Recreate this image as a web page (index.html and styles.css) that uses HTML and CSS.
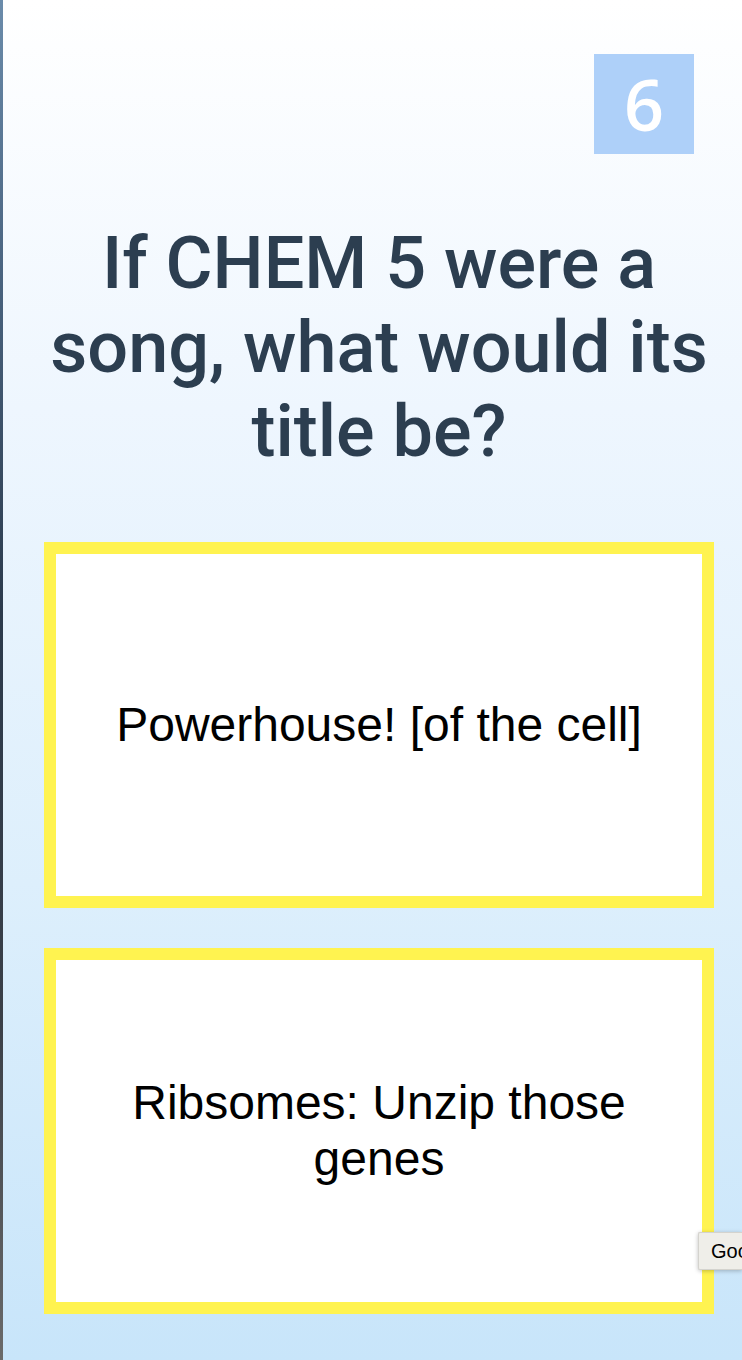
FILE: index.html
```html
<!DOCTYPE html>
<html lang="en">
<head>
<meta charset="utf-8">
<title>Question 6</title>
<link rel="stylesheet" href="styles.css">
</head>
<body>
<div class="edge"></div>
<main class="page">
  <div class="header">
    <div class="badge">6</div>
  </div>
  <h1 class="question">If CHEM 5 were a song, what would its title be?</h1>
  <div class="answers">
    <div class="card"><p class="answer">Powerhouse! [of the cell]</p></div>
    <div class="card"><p class="answer">Ribsomes: Unzip those genes</p></div>
  </div>
</main>
<div class="translate">Google</div>
</body>
</html>
```
FILE: styles.css
```css
html, body {
  margin: 0;
  padding: 0;
}
body {
  display: flex;
  min-height: 1360px;
  width: 742px;
  overflow: hidden;
  background: linear-gradient(to bottom, #ffffff 0%, #eef6fe 30%, #ddeffc 65%, #c8e5fa 100%);
  position: relative;
}
.edge {
  flex: 0 0 3px;
  background: linear-gradient(to bottom, #6b8cab 0%, #4a6480 20%, #2b3a4c 45%, #3a3f47 75%, #6a6a6a 100%);
}
.page {
  flex: 1;
  padding: 54px 28px 0 41px;
  display: flex;
  flex-direction: column;
}
.header {
  display: flex;
  justify-content: flex-end;
  padding-right: 20px;
}
.badge {
  width: 100px;
  height: 100px;
  background: #aed0f9;
  color: #ffffff;
  font-family: "Open Sans", "Noto Sans", sans-serif;
  font-weight: 600;
  font-size: 70px;
  line-height: 100px;
  text-align: center;
}
.question {
  margin: 68px 0 0;
  font-family: Roboto, "Noto Sans", sans-serif;
  font-weight: 500;
  font-size: 72px;
  line-height: 84px;
  color: #2c3e50;
  text-align: center;
}
.answers {
  margin-top: 68px;
  display: flex;
  flex-direction: column;
  gap: 40px;
}
.card {
  height: 366px;
  box-sizing: border-box;
  border: 12px solid #fff350;
  background: #ffffff;
  display: flex;
  align-items: center;
  justify-content: center;
  padding: 0 30px;
}
.answer {
  margin: 0;
  font-family: "Liberation Sans", Arial, sans-serif;
  font-size: 48px;
  line-height: 56px;
  color: #000000;
  text-align: center;
}
.translate {
  position: absolute;
  left: 698px;
  top: 1232px;
  width: 44px;
  height: 38px;
  padding: 0 0 0 12px;
  box-sizing: border-box;
  overflow: hidden;
  background: #efeee9;
  border: 1px solid #d4d3ce;
  border-right: none;
  border-radius: 2px 0 0 2px;
  box-shadow: 0 1px 4px rgba(0,0,0,0.25);
  font-family: "Liberation Sans", Arial, sans-serif;
  font-size: 20px;
  line-height: 36px;
  color: #000;
  white-space: nowrap;
}
```
